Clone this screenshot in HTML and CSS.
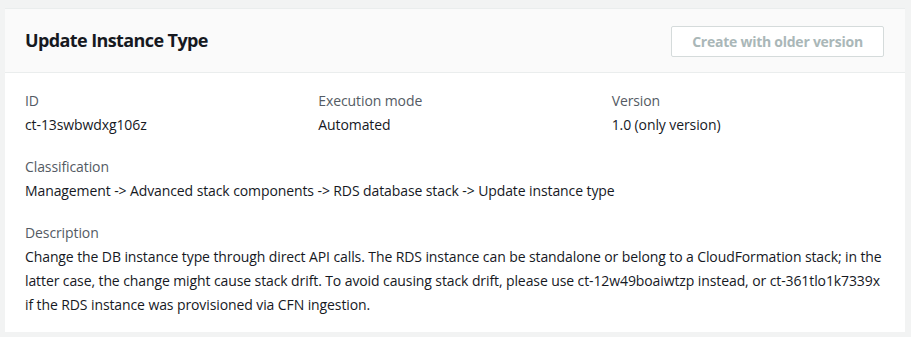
FILE: index.html
```html
<!DOCTYPE html>
<html lang="en">
<head>
<meta charset="utf-8">
<title>Update Instance Type</title>
<link rel="stylesheet" href="styles.css">
</head>
<body>
<section class="card">
  <header class="card-header">
    <h2 class="card-title">Update Instance Type</h2>
    <button class="btn-disabled" type="button" disabled>Create with older version</button>
  </header>
  <div class="card-body">
    <div class="columns">
      <div class="field">
        <div class="label">ID</div>
        <div class="value">ct-13swbwdxg106z</div>
      </div>
      <div class="field">
        <div class="label">Execution mode</div>
        <div class="value">Automated</div>
      </div>
      <div class="field">
        <div class="label">Version</div>
        <div class="value">1.0 (only version)</div>
      </div>
    </div>
    <div class="field">
      <div class="label">Classification</div>
      <div class="value">Management -&gt; Advanced stack components -&gt; RDS database stack -&gt; Update instance type</div>
    </div>
    <div class="field">
      <div class="label">Description</div>
      <div class="value">Change the DB instance type through direct API calls. The RDS instance can be standalone or belong to a CloudFormation stack; in the latter case, the change might cause stack drift. To avoid causing stack drift, please use ct-12w49boaiwtzp instead, or ct-361tlo1k7339x if the RDS instance was provisioned via CFN ingestion.</div>
    </div>
  </div>
</section>
</body>
</html>
```
FILE: styles.css
```css
html, body {
  background: #f2f3f3;
}
body {
  margin: 8px 6px 0 5px;
  font-family: "Open Sans", "Noto Sans", Arial, sans-serif;
  font-size: 14px;
  letter-spacing: -0.1px;
  color: #16191f;
}
.card {
  background: #ffffff;
  border-top: 1px solid #eaeded;
  box-shadow: 0 1px 1px 0 rgba(0, 28, 36, 0.3), 1px 1px 1px 0 rgba(0, 28, 36, 0.15), -1px 1px 1px 0 rgba(0, 28, 36, 0.15);
}
.card-header {
  display: flex;
  align-items: center;
  justify-content: space-between;
  background: #fafafa;
  border-bottom: 1px solid #eaeded;
  height: 64px;
  box-sizing: border-box;
  padding: 0 21px 0 20px;
}
.card-title {
  margin: -2px 0 0 0;
  font-size: 18px;
  font-weight: 700;
  letter-spacing: -0.6px;
  color: #16191f;
  line-height: 24px;
}
.btn-disabled {
  font-family: inherit;
  font-size: 14px;
  font-weight: 700;
  letter-spacing: -0.25px;
  color: #aab7b8;
  background: #ffffff;
  border: 1px solid #d5dbdb;
  border-radius: 2px;
  width: 213px;
  height: 31px;
  padding: 0;
  margin-top: 1px;
}
.card-body {
  padding: 16px 20px 15px 20px;
}
.columns {
  display: grid;
  grid-template-columns: repeat(3, 1fr);
  column-gap: 20px;
}
.field {
  margin-bottom: 18px;
}
.card-body > .field:last-child {
  margin-bottom: 0;
}
.label {
  color: #545b64;
  line-height: 24px;
}
.value {
  color: #16191f;
  line-height: 24px;
}
```
